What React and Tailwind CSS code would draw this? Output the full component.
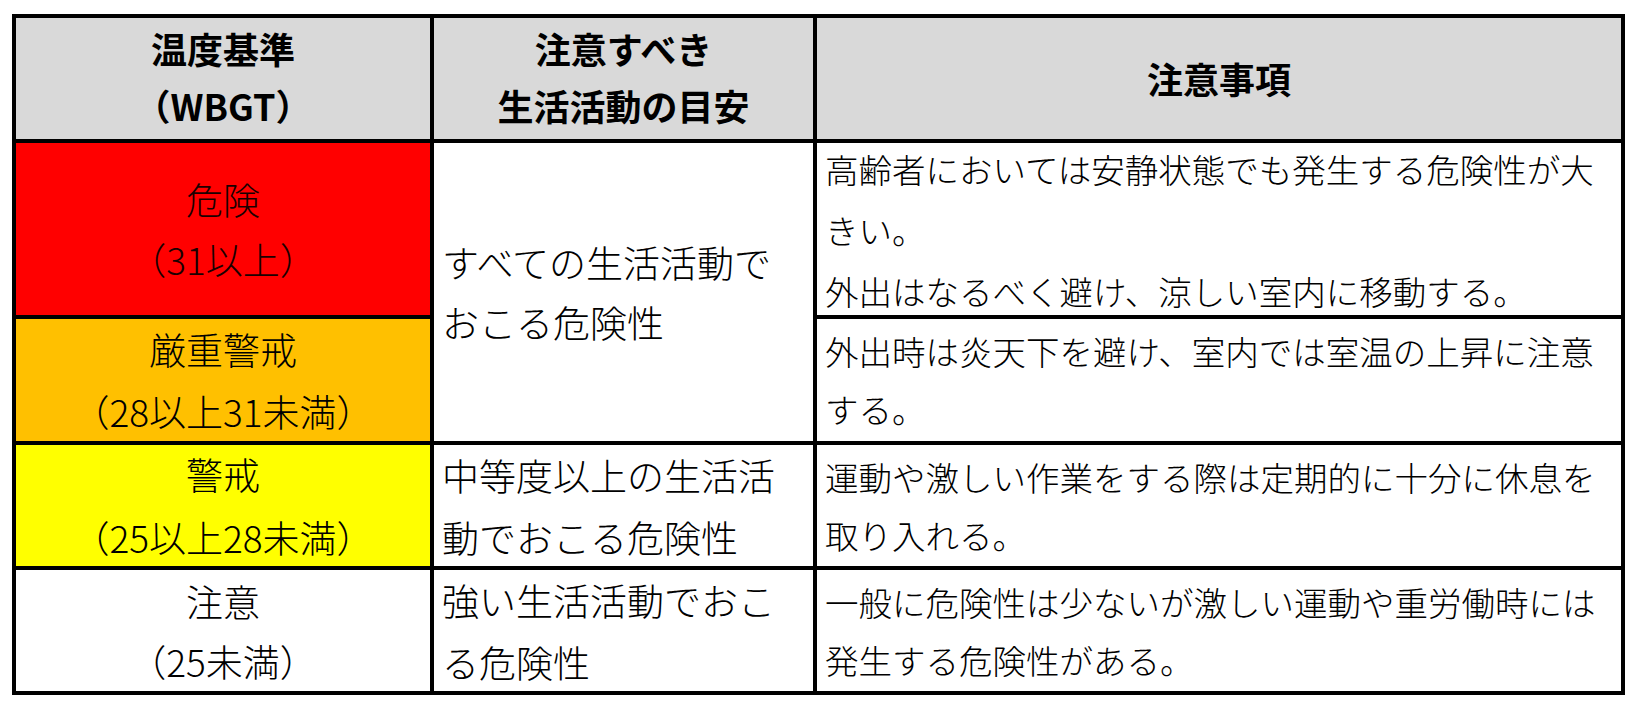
import React from "react";

const font = { fontFamily: '"Noto Sans CJK JP", "Noto Sans", sans-serif' };

function Lines({ lines }) {
  return lines.map((l, i) => (
    <div key={i} className="whitespace-nowrap">
      {l}
    </div>
  ));
}

export default function App() {
  return (
    <div className="w-[1642px] h-[708px] bg-white pl-[12px] pt-[14px]" style={font}>
      <div className="w-[1613px] bg-black p-[4px]">
        <div className="grid grid-cols-[414px_379px_804px] grid-rows-[121px_172px_122px_121px_121px] gap-[4px] text-black">
          {/* Header */}
          <div className="bg-[#d9d9d9] flex flex-col items-center justify-center text-[36px] leading-[57px] font-bold pb-[4px]">
            <Lines lines={["温度基準", "（WBGT）"]} />
          </div>
          <div className="bg-[#d9d9d9] flex flex-col items-center justify-center text-[36px] leading-[57px] font-bold pb-[4px]">
            <Lines lines={["注意すべき", "生活活動の目安"]} />
          </div>
          <div className="bg-[#d9d9d9] flex flex-col items-center justify-center text-[36px] leading-[57px] font-bold">
            <Lines lines={["注意事項"]} />
          </div>

          {/* Row 1: 危険 */}
          <div className="bg-[#ff0000] flex flex-col items-center justify-center text-[37px] leading-[60px] font-light text-[#1a0000]">
            <Lines lines={["危険", "（31以上）"]} />
          </div>
          <div className="row-span-2 bg-white flex flex-col justify-center pl-[8px] text-[37px] leading-[60px] font-light">
            <Lines lines={["すべての生活活動で", "おこる危険性"]} />
          </div>
          <div className="bg-white flex flex-col justify-center pl-[8px] text-[33.5px] leading-[61px] font-light">
            <Lines
              lines={[
                "高齢者においては安静状態でも発生する危険性が大",
                "きい。",
                "外出はなるべく避け、涼しい室内に移動する。",
              ]}
            />
          </div>

          {/* Row 2: 厳重警戒 */}
          <div className="bg-[#ffc000] flex flex-col items-center justify-center text-[37px] leading-[62px] font-light">
            <Lines lines={["厳重警戒", "（28以上31未満）"]} />
          </div>
          <div className="bg-white flex flex-col justify-center pl-[8px] text-[33.5px] leading-[58px] font-light">
            <Lines lines={["外出時は炎天下を避け、室内では室温の上昇に注意", "する。"]} />
          </div>

          {/* Row 3: 警戒 */}
          <div className="bg-[#ffff00] flex flex-col items-center justify-center text-[37px] leading-[63px] font-light">
            <Lines lines={["警戒", "（25以上28未満）"]} />
          </div>
          <div className="bg-white flex flex-col justify-center pl-[8px] text-[37px] leading-[62px] font-light">
            <Lines lines={["中等度以上の生活活", "動でおこる危険性"]} />
          </div>
          <div className="bg-white flex flex-col justify-center pl-[8px] text-[33.5px] leading-[58px] font-light">
            <Lines lines={["運動や激しい作業をする際は定期的に十分に休息を", "取り入れる。"]} />
          </div>

          {/* Row 4: 注意 */}
          <div className="bg-white flex flex-col items-center justify-center text-[37px] leading-[60px] font-light">
            <Lines lines={["注意", "（25未満）"]} />
          </div>
          <div className="bg-white flex flex-col justify-center pl-[8px] text-[37px] leading-[62px] font-light">
            <Lines lines={["強い生活活動でおこ", "る危険性"]} />
          </div>
          <div className="bg-white flex flex-col justify-center pl-[8px] text-[33.5px] leading-[58px] font-light">
            <Lines lines={["一般に危険性は少ないが激しい運動や重労働時には", "発生する危険性がある。"]} />
          </div>
        </div>
      </div>
    </div>
  );
}
